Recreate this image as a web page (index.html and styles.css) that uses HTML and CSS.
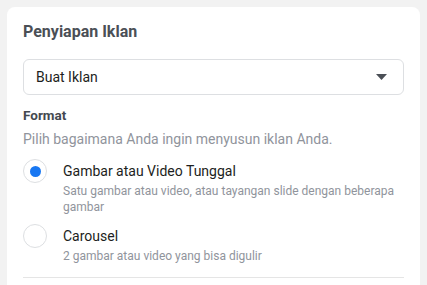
FILE: index.html
```html
<!DOCTYPE html>
<html lang="id">
<head>
    <meta charset="UTF-8">
    <meta name="viewport" content="width=device-width, initial-scale=1.0">
    <title>Penyiapan Iklan</title>
    <link rel="stylesheet" href="styles.css">
</head>
<body>
    <div class="card">
        <h2 class="card-title">Penyiapan Iklan</h2>

        <!-- Pilihan jenis iklan -->
        <div class="select">
            <span>Buat Iklan</span>
            <svg class="select-arrow" width="11" height="6" viewBox="0 0 11 6">
                <path d="M0 0 H11 L5.5 6 Z" fill="#4b4f56"/>
            </svg>
        </div>

        <h3 class="section-title">Format</h3>
        <p class="section-desc">Pilih bagaimana Anda ingin menyusun iklan Anda.</p>

        <div class="options">
            <div class="option">
                <span class="radio checked"></span>
                <div class="option-text">
                    <div class="option-name">Gambar atau Video Tunggal</div>
                    <div class="option-desc">Satu gambar atau video, atau tayangan slide dengan beberapa gambar</div>
                </div>
            </div>
            <div class="option">
                <span class="radio"></span>
                <div class="option-text">
                    <div class="option-name">Carousel</div>
                    <div class="option-desc">2 gambar atau video yang bisa digulir</div>
                </div>
            </div>
        </div>

        <hr class="divider">
    </div>
</body>
</html>
```

FILE: styles.css
```css
body {
    font-family: Roboto, "Liberation Sans", sans-serif;
    background-color: #f2f2f2;
    margin: 0;
    padding: 7px 7px 0;
}
.card {
    box-sizing: border-box;
    height: 278px;
    background: #fff;
    border-radius: 8px 8px 0 0;
    padding: 15px 16px 0;
}
.card-title {
    margin: 0 0 17px;
    font-size: 16px;
    line-height: 20px;
    font-weight: 700;
    color: #4b4f56;
}
.select {
    display: flex;
    align-items: center;
    justify-content: space-between;
    height: 34px;
    padding: 0 16px 0 12px;
    border: 1px solid #dddfe2;
    border-radius: 6px;
    font-size: 14px;
    color: #1c1e21;
}
.section-title {
    margin: 12px 0 0;
    font-size: 13.5px;
    line-height: 16px;
    font-weight: 700;
    color: #444950;
}
.section-desc {
    margin: 6px 0 0;
    font-size: 14px;
    line-height: 20px;
    color: #90949c;
}
.options {
    margin-top: 12px;
    display: flex;
    flex-direction: column;
    gap: 11px;
}
.option {
    display: flex;
    gap: 16px;
}
.radio {
    flex: none;
    box-sizing: border-box;
    width: 24px;
    height: 24px;
    margin-top: -2px;
    border: 1px solid #dddfe2;
    border-radius: 50%;
    display: flex;
    align-items: center;
    justify-content: center;
}
.radio.checked::after {
    content: '';
    width: 11px;
    height: 11px;
    border-radius: 50%;
    background: #1877f2;
}
.option-name {
    font-size: 14px;
    line-height: 20px;
    color: #1c1e21;
}
.option-desc {
    margin-top: 2px;
    font-size: 12px;
    line-height: 16px;
    color: #90949c;
}
.divider {
    margin: 13px 0 0;
    border: none;
    border-top: 1px solid #e5e5e5;
}
```
